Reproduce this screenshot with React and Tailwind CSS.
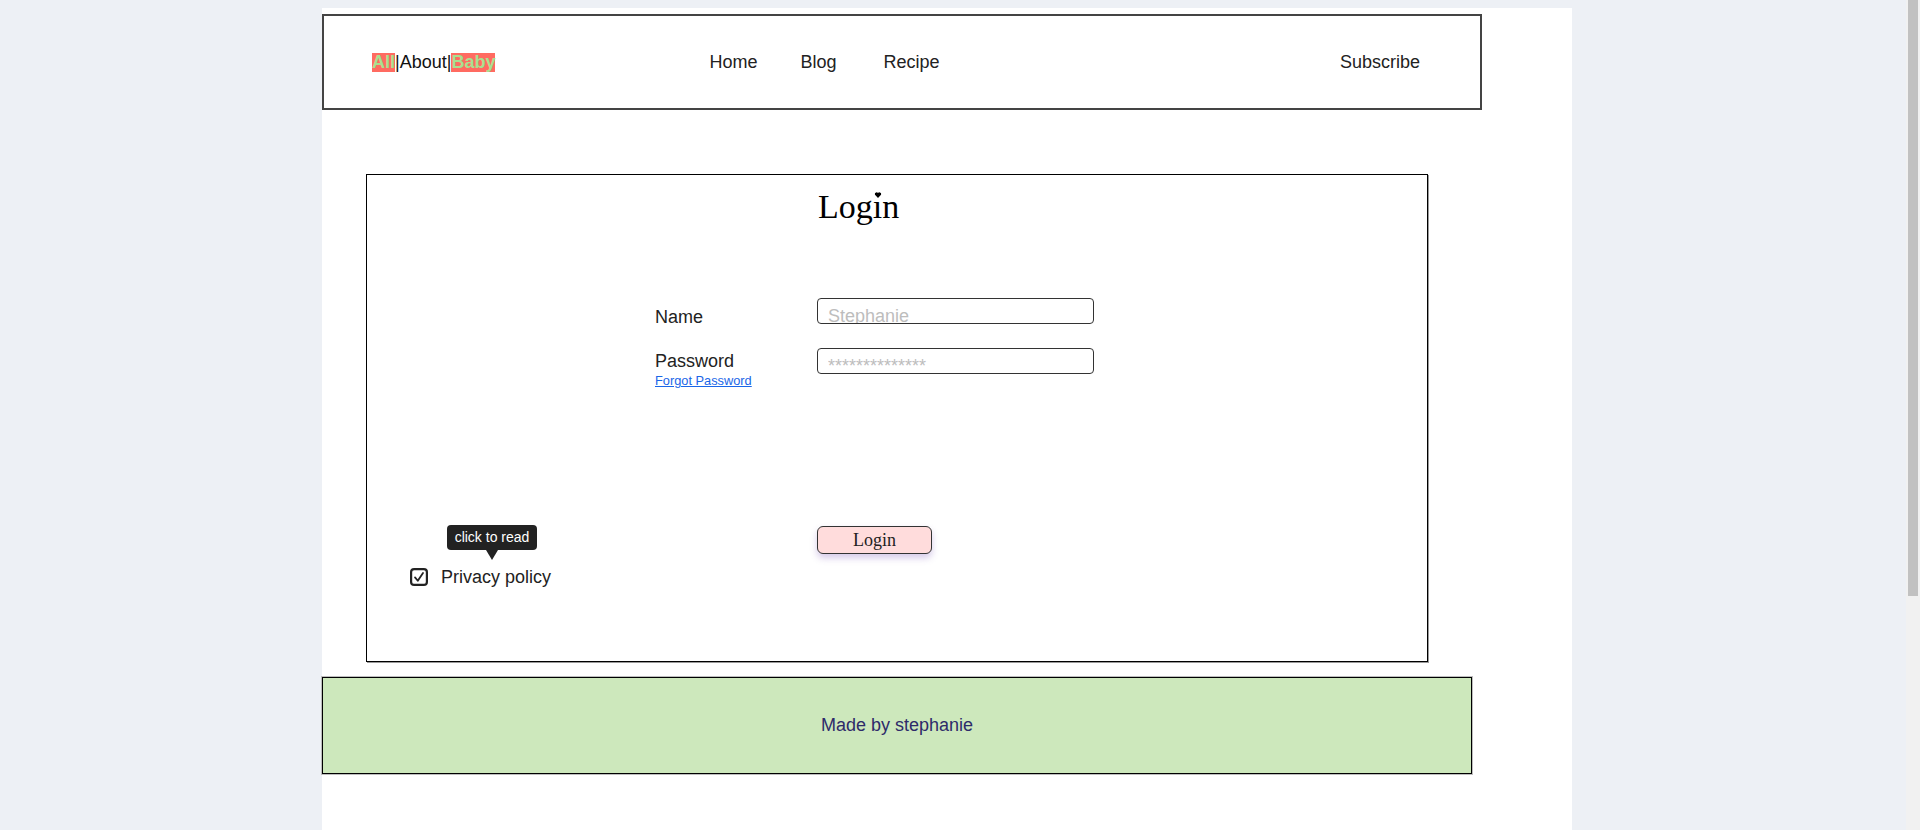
import { useState } from "react";

const navLinks = [
  { label: "Home", cls: "" },
  { label: "Blog", cls: "ml-[43px]" },
  { label: "Recipe", cls: "ml-[47px]" },
];

function CheckIcon() {
  return (
    <svg width="18" height="18" viewBox="0 0 18 18" className="shrink-0">
      <rect x="1.1" y="1.1" width="15.8" height="15.8" rx="3" fill="#fff" stroke="#222" strokeWidth="2.2" />
      <path d="M5 9.4 L7.8 12.8 L13 5" fill="none" stroke="#222" strokeWidth="1.8" strokeLinecap="round" strokeLinejoin="round" />
    </svg>
  );
}

// tiny heart used as the dot of the "i"
function Heart() {
  return (
    <svg width="7" height="6" viewBox="0 0 10 9" className="absolute left-1/2 top-[2px] -translate-x-1/2">
      <path d="M5 9 L0.8 4.6 A2.4 2.4 0 0 1 5 1.6 A2.4 2.4 0 0 1 9.2 4.6 Z" fill="#000" />
    </svg>
  );
}

export default function App() {
  const [name, setName] = useState("");
  const [password, setPassword] = useState("");

  return (
    <div className="flex h-[830px] overflow-hidden bg-[#edf0f5] font-['Liberation_Sans',Arial,sans-serif] text-[#222]">
      <div className="flex-1 pt-[8px]">
        <div className="ml-[322px] w-[1250px] min-h-[822px] bg-white pt-[6px]">
          {/* header */}
          <header className="flex h-[96px] w-[1160px] items-center border-2 border-[#444] pl-[48px] pr-[60px] text-[18px]">
            <div className="flex items-center">
              <span className="inline-block bg-[#ff6b61] font-bold leading-[19px] text-[#a9e090]">All</span>
              <span className="text-[#111]">|About|</span>
              <span className="inline-block bg-[#ff6b61] font-bold leading-[19px] text-[#a9e090]">Baby</span>
            </div>
            <nav className="ml-[214px] flex">
              {navLinks.map((l) => (
                <a key={l.label} href="#" className={l.cls}>
                  {l.label}
                </a>
              ))}
            </nav>
            <a href="#" className="ml-auto">
              Subscribe
            </a>
          </header>

          {/* login box */}
          <section className="ml-[44px] mt-[64px] h-[488px] w-[1062px] border border-black shadow-[1px_1px_0_#9a9a9a]">
            <h2 className="pl-[451px] pt-[15px] font-['Liberation_Serif',serif] text-[34px] font-normal leading-[34px] text-black">
              Log
              <span className="relative inline-block">
                ı
                <Heart />
              </span>
              n
            </h2>

            <div className="mt-[74px] pl-[288px] text-[18px]">
              <div className="flex h-[50px] items-start">
                <label className="mt-[9px] w-[162px] leading-[20px]">Name</label>
                <input
                  value={name}
                  onChange={(e) => setName(e.target.value)}
                  placeholder="Stephanie"
                  className="h-[26px] w-[277px] rounded-[4px] border border-[#333] pl-[10px] pt-[10px] text-[18px] outline-none placeholder:text-[#bdbdbd]"
                />
              </div>
              <div className="flex items-start">
                <div className="w-[162px]">
                  <label className="mt-[3px] block leading-[20px]">Password</label>
                  <a href="#" className="mt-[2px] block text-[12.8px] leading-[15px] text-[#1a66e8] underline">
                    Forgot Password
                  </a>
                </div>
                <input
                  type="password"
                  value={password}
                  onChange={(e) => setPassword(e.target.value)}
                  placeholder="**************"
                  className="h-[26px] w-[277px] rounded-[4px] border border-[#333] pl-[10px] pt-[10px] text-[18px] outline-none placeholder:text-[#bdbdbd]"
                />
              </div>
            </div>

            <div className="mt-[137px] flex items-start">
              <div className="w-[450px] pl-[43px]">
                <div className="relative ml-[37px] h-[25px] w-[90px] rounded-[4px] bg-[#222] text-center text-[14px] leading-[25px] text-white">
                  click to read
                  <span className="absolute left-1/2 top-full -translate-x-1/2 border-x-[6px] border-t-[10px] border-x-transparent border-t-[#222]" />
                </div>
                <label className="mt-[17px] flex h-[20px] items-center gap-[13px] text-[18px] leading-[20px]">
                  <CheckIcon />
                  Privacy policy
                </label>
              </div>
              <button className="mt-[1px] h-[28px] w-[115px] rounded-[6px] border border-[#333] bg-[#ffdcdc] font-['Liberation_Serif',serif] text-[18px] text-[#222] shadow-[0_4px_7px_rgba(120,80,180,0.3)]">
                Login
              </button>
            </div>
          </section>

          {/* footer */}
          <footer className="mt-[15px] flex h-[97px] w-[1150px] items-center justify-center border border-black bg-[#cde8bc] text-[18px] text-[#2e2b6a] shadow-[0_0_0_1px_#bdbdbd]">
            Made by stephanie
          </footer>
        </div>
      </div>

      {/* scrollbar */}
      <div className="w-[14px] bg-[#f1f1f1] px-[2px]">
        <div className="h-[596px] w-[10px] bg-[#c1c1c1]" />
      </div>
    </div>
  );
}
